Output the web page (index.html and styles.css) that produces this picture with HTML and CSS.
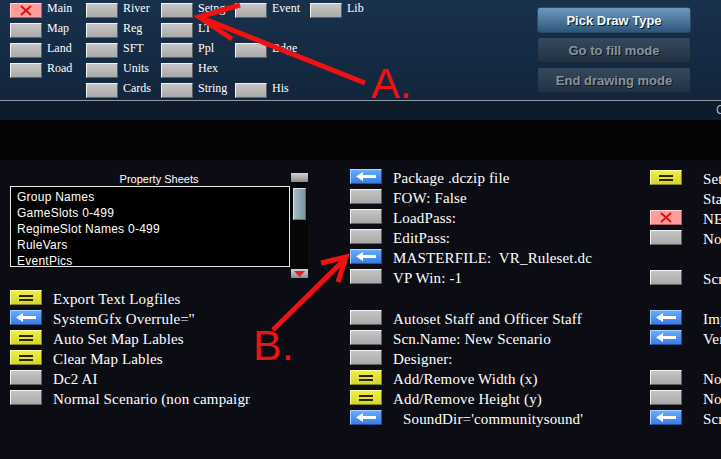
FILE: index.html
```html
<html>
<head>
<meta http-equiv="content-type" content="text/html; charset=UTF-8">
<link rel="stylesheet" href="styles.css">
</head>
<body>
<div class="editor_top">
	<div class="tool_grid">
		<div class="tool"><span class="btn btn_red"><svg width="14" height="11" viewBox="0 0 14 11"><path d="M2 1L12 10M12 1L2 10" stroke="#e41010" stroke-width="2"/></svg></span><span class="tool_label">Main</span></div>
		<div class="tool"><span class="btn"></span><span class="tool_label">River</span></div>
		<div class="tool"><span class="btn"></span><span class="tool_label">Setng</span></div>
		<div class="tool"><span class="btn"></span><span class="tool_label">Event</span></div>
		<div class="tool"><span class="btn"></span><span class="tool_label">Lib</span></div>

		<div class="tool"><span class="btn"></span><span class="tool_label">Map</span></div>
		<div class="tool"><span class="btn"></span><span class="tool_label">Reg</span></div>
		<div class="tool"><span class="btn"></span><span class="tool_label">LT</span></div>
		<div></div>
		<div></div>

		<div class="tool"><span class="btn"></span><span class="tool_label">Land</span></div>
		<div class="tool"><span class="btn"></span><span class="tool_label">SFT</span></div>
		<div class="tool"><span class="btn"></span><span class="tool_label">Ppl</span></div>
		<div class="tool"><span class="btn"></span><span class="tool_label">Bdge</span></div>
		<div></div>

		<div class="tool"><span class="btn"></span><span class="tool_label">Road</span></div>
		<div class="tool"><span class="btn"></span><span class="tool_label">Units</span></div>
		<div class="tool"><span class="btn"></span><span class="tool_label">Hex</span></div>
		<div></div>
		<div></div>

		<div></div>
		<div class="tool"><span class="btn"></span><span class="tool_label">Cards</span></div>
		<div class="tool"><span class="btn"></span><span class="tool_label">String</span></div>
		<div class="tool"><span class="btn"></span><span class="tool_label">His</span></div>
		<div></div>
	</div>
	<div class="draw_buttons">
		<div class="draw_btn draw_btn_on">Pick Draw Type</div>
		<div class="draw_btn">Go to fill mode</div>
		<div class="draw_btn">End drawing mode</div>
	</div>
</div>
<div class="status_band">C</div>
<div class="black_band"></div>

<div class="editor_main">
	<div class="col_left">
		<div class="props">
			<div class="props_main">
				<div class="props_title">Property Sheets</div>
				<div class="listbox">
					<div>Group Names</div>
					<div>GameSlots 0-499</div>
					<div>RegimeSlot Names 0-499</div>
					<div>RuleVars</div>
					<div>EventPics</div>
					<div>Sounds</div>
				</div>
			</div>
			<div class="scrollbar">
				<div class="scroll_btn"></div>
				<div class="scroll_thumb"></div>
				<div class="scroll_btn scroll_down"><svg width="11" height="6" viewBox="0 0 11 6"><path d="M0 0H11L5.5 6Z" fill="#e02020"/></svg></div>
			</div>
		</div>
		<div class="opt_list">
			<div class="opt"><span class="btn btn_yellow"><span class="eq"></span></span><span class="opt_label clip">Export Text Logfiles</span></div>
			<div class="opt"><span class="btn btn_blue"><svg width="20" height="9" viewBox="0 0 20 9"><path d="M0 4.5L7 0V3H20V6H7V9Z" fill="#fff"/></svg></span><span class="opt_label clip">SystemGfx Overrule=''</span></div>
			<div class="opt"><span class="btn btn_yellow"><span class="eq"></span></span><span class="opt_label clip">Auto Set Map Lables</span></div>
			<div class="opt"><span class="btn btn_yellow"><span class="eq"></span></span><span class="opt_label clip">Clear Map Lables</span></div>
			<div class="opt"><span class="btn"></span><span class="opt_label clip">Dc2 AI</span></div>
			<div class="opt"><span class="btn"></span><span class="opt_label clip">Normal Scenario (non campaign)</span></div>
		</div>
	</div>

	<div class="col_mid">
		<div class="opt"><span class="btn btn_blue"><svg width="20" height="9" viewBox="0 0 20 9"><path d="M0 4.5L7 0V3H20V6H7V9Z" fill="#fff"/></svg></span><span class="opt_label">Package .dczip file</span></div>
		<div class="opt"><span class="btn"></span><span class="opt_label">FOW: False</span></div>
		<div class="opt"><span class="btn"></span><span class="opt_label">LoadPass:</span></div>
		<div class="opt"><span class="btn"></span><span class="opt_label">EditPass:</span></div>
		<div class="opt"><span class="btn btn_blue"><svg width="20" height="9" viewBox="0 0 20 9"><path d="M0 4.5L7 0V3H20V6H7V9Z" fill="#fff"/></svg></span><span class="opt_label">MASTERFILE:&nbsp; VR_Ruleset.dc</span></div>
		<div class="opt"><span class="btn"></span><span class="opt_label">VP Win: -1</span></div>
		<div class="opt_gap"></div>
		<div class="opt"><span class="btn"></span><span class="opt_label">Autoset Staff and Officer Staff</span></div>
		<div class="opt"><span class="btn"></span><span class="opt_label">Scn.Name: New Scenario</span></div>
		<div class="opt"><span class="btn"></span><span class="opt_label">Designer:</span></div>
		<div class="opt"><span class="btn btn_yellow"><span class="eq"></span></span><span class="opt_label">Add/Remove Width (x)</span></div>
		<div class="opt"><span class="btn btn_yellow"><span class="eq"></span></span><span class="opt_label">Add/Remove Height (y)</span></div>
		<div class="opt"><span class="btn btn_blue"><svg width="20" height="9" viewBox="0 0 20 9"><path d="M0 4.5L7 0V3H20V6H7V9Z" fill="#fff"/></svg></span><span class="opt_label indent">SoundDir='communitysound'</span></div>
	</div>

	<div class="col_right">
		<div class="opt"><span class="btn btn_yellow"><span class="eq"></span></span><span class="opt_label">Set Startdate</span></div>
		<div class="opt"><span class="btn btn_blank"></span><span class="opt_label">Startturn: 1</span></div>
		<div class="opt"><span class="btn btn_red"><svg width="14" height="11" viewBox="0 0 14 11"><path d="M2 1L12 10M12 1L2 10" stroke="#e41010" stroke-width="2"/></svg></span><span class="opt_label">NEW Scenario</span></div>
		<div class="opt"><span class="btn"></span><span class="opt_label">No Cards</span></div>
		<div class="opt_row_empty"></div>
		<div class="opt"><span class="btn"></span><span class="opt_label">Scn Picture</span></div>
		<div class="opt_row_empty"></div>
		<div class="opt"><span class="btn btn_blue"><svg width="20" height="9" viewBox="0 0 20 9"><path d="M0 4.5L7 0V3H20V6H7V9Z" fill="#fff"/></svg></span><span class="opt_label">Import</span></div>
		<div class="opt"><span class="btn btn_blue"><svg width="20" height="9" viewBox="0 0 20 9"><path d="M0 4.5L7 0V3H20V6H7V9Z" fill="#fff"/></svg></span><span class="opt_label">Version</span></div>
		<div class="opt_row_empty"></div>
		<div class="opt"><span class="btn"></span><span class="opt_label">No Fog</span></div>
		<div class="opt"><span class="btn"></span><span class="opt_label">No Hist</span></div>
		<div class="opt"><span class="btn btn_blue"><svg width="20" height="9" viewBox="0 0 20 9"><path d="M0 4.5L7 0V3H20V6H7V9Z" fill="#fff"/></svg></span><span class="opt_label">Scripts</span></div>
	</div>
</div>

<!-- red markup drawn over the screenshot -->
<svg class="annot" width="721" height="459" viewBox="0 0 721 459">
	<g stroke="#f01212" stroke-width="5" fill="none">
		<path d="M202 18L365 83"/>
		<path d="M240 5L199 17L232 39"/>
		<path d="M273 330L343 261"/>
		<path d="M321 263L346 257L338 282"/>
	</g>
	<text x="371" y="98" class="annot_text">A.</text>
	<text x="253" y="360" class="annot_text">B.</text>
</svg>
</body>
</html>
```

FILE: styles.css
```css
body { margin:0; width:721px; height:459px; overflow:hidden; position:relative; background:#0c0d14; color:#fff; font-family:"Liberation Serif", serif; }

.editor_top { height:101px; box-sizing:border-box; display:flex; background:linear-gradient(#19314d, #12253c); border-bottom:1px solid #8d9aa6; }
.tool_grid { display:grid; grid-template-columns:76px 75px 74px 75px 60px; grid-auto-rows:20px; padding:3px 0 0 10px; }
.tool { display:flex; align-items:flex-start; gap:5px; }
.tool_label { font-size:12px; line-height:11px; white-space:nowrap; }

.draw_buttons { margin:7px 30px 0 auto; display:flex; flex-direction:column; gap:4px; }
.draw_btn { width:154px; height:26px; box-sizing:border-box; border:1px solid #16293b; border-radius:3px; background:linear-gradient(#36495d, #223244); color:#8a939c; font:bold 13px "Liberation Sans", sans-serif; display:flex; align-items:center; justify-content:center; text-shadow:1px 1px 0 #0c1520; }
.draw_btn_on { background:linear-gradient(#6c9ac0, #2e5779); border-color:#2a4a68; color:#f4f8fc; }

.status_band { height:19px; background:#0e1b2b; padding-left:716px; font:12px/19px "Liberation Sans", sans-serif; color:#aab4be; white-space:nowrap; overflow:hidden; }
.black_band { height:40px; background:#040406; }

/* option buttons */
.btn { width:32px; height:15px; box-sizing:border-box; flex:none; display:flex; align-items:center; justify-content:center; border:1px solid; border-color:#f2f2f2 #606060 #606060 #f2f2f2; background:linear-gradient(#c6c6c6, #a9a9a9); }
.btn_red { background:#ff9c9c; border-color:#ffd4d4 #b86060 #b86060 #ffd4d4; }
.btn_blue { background:linear-gradient(#66acff, #3a7de4); border-color:#a8d2ff #1e4e9e #1e4e9e #a8d2ff; }
.btn_yellow { background:linear-gradient(#eeee46, #d6d62c); border-color:#fbfba0 #85850f #85850f #fbfba0; }
.btn_blank { visibility:hidden; }
.eq { width:14px; height:2px; border-top:2px solid #262600; border-bottom:2px solid #262600; }

.editor_main { display:flex; padding-left:10px; }
.col_left { width:298px; padding-top:13px; flex:none; }
.props { display:flex; }
.props_main { width:280px; }
.props_title { height:13px; padding-left:18px; font:11px/13px "Liberation Sans", sans-serif; text-align:center; }
.listbox { height:81px; box-sizing:border-box; border:1px solid #e6e6e6; background:#000; padding:2px 0 0 6px; overflow:hidden; font:12px/16px "Liberation Sans", sans-serif; letter-spacing:0.25px; }
.scrollbar { width:18px; height:105px; display:flex; flex-direction:column; align-items:center; background:#060607; }
.scroll_btn { width:17px; height:9px; background:linear-gradient(#d4d4d4, #8a8a8a); display:flex; align-items:center; justify-content:center; }
.scroll_thumb { width:13px; height:32px; margin-top:6px; box-sizing:border-box; border:1px solid #c8d4da; border-color:#d8e2e8 #56707e #56707e #d8e2e8; background:linear-gradient(90deg, #a8bcc6, #7a94a2); }
.scroll_down { margin-top:auto; }

.opt_list { margin-top:12px; }
.opt { display:flex; align-items:flex-start; height:20px; }
.opt_label { margin-left:11px; font-size:15px; line-height:18px; letter-spacing:0.15px; white-space:nowrap; }
.clip { width:197px; overflow:hidden; }
.indent { padding-left:10px; }
.opt_gap { height:21px; }
.opt_row_empty { height:20px; }

.col_mid { width:300px; margin-left:42px; padding-top:9px; flex:none; }
.col_right { flex:1; padding-top:10px; overflow:hidden; }
.col_right .opt_label { margin-left:21px; }

.annot { position:absolute; left:0; top:0; pointer-events:none; }
.annot_text { font:43px "Liberation Sans", sans-serif; fill:#f01212; }
```
